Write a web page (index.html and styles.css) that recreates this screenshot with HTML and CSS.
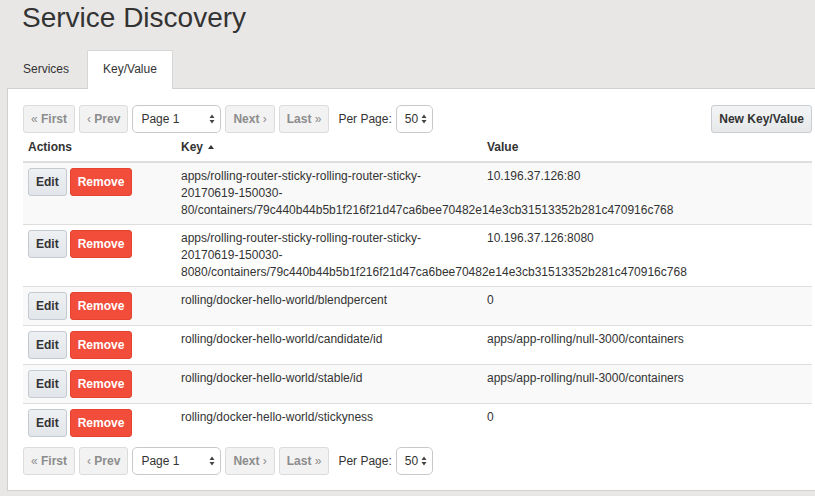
FILE: index.html
```html
<!DOCTYPE html>
<html lang="en">
<head>
<meta charset="utf-8">
<title>Service Discovery</title>
<link rel="stylesheet" href="styles.css">
</head>
<body>
<div class="page">
  <h1 class="title">Service Discovery</h1>
  <nav class="tabs">
    <a class="tab">Services</a>
    <a class="tab active">Key/Value</a>
  </nav>
  <section class="panel">
    <div class="toolbar">
      <div class="pager">
        <span class="pbtn"><span class="ar">«</span> First</span>
        <span class="pbtn"><span class="ar">‹</span> Prev</span>
        <div class="select page-select">
          <span>Page 1</span>
          <svg class="updown" width="6" height="10" viewBox="0 0 6 10"><path d="M3 0.5 L5.5 4 L0.5 4 Z M0.5 6 L5.5 6 L3 9.5 Z" fill="#444"/></svg>
        </div>
        <span class="pbtn">Next <span class="ar">›</span></span>
        <span class="pbtn">Last <span class="ar">»</span></span>
        <div class="perpage">
          <span class="label">Per Page:</span>
          <div class="select per-select">
            <span>50</span>
            <svg class="updown" width="6" height="10" viewBox="0 0 6 10"><path d="M3 0.5 L5.5 4 L0.5 4 Z M0.5 6 L5.5 6 L3 9.5 Z" fill="#444"/></svg>
          </div>
        </div>
      </div>
      <span class="btn btn-default">New Key/Value</span>
    </div>

    <table class="kv">
      <colgroup>
        <col class="c-actions">
        <col class="c-key">
        <col>
      </colgroup>
      <thead>
        <tr>
          <th>Actions</th>
          <th>Key <span class="sort-up"></span></th>
          <th>Value</th>
        </tr>
      </thead>
      <tbody>
        <tr>
          <td><div class="actions"><span class="btn btn-edit">Edit</span><span class="btn btn-remove">Remove</span></div></td>
          <td class="key">apps/rolling-router-sticky-rolling-router-sticky-<br>20170619-150030-<br>80/containers/79c440b44b5b1f216f21d47ca6bee70482e14e3cb31513352b281c470916c768</td>
          <td>10.196.37.126:80</td>
        </tr>
        <tr>
          <td><div class="actions"><span class="btn btn-edit">Edit</span><span class="btn btn-remove">Remove</span></div></td>
          <td class="key">apps/rolling-router-sticky-rolling-router-sticky-<br>20170619-150030-<br>8080/containers/79c440b44b5b1f216f21d47ca6bee70482e14e3cb31513352b281c470916c768</td>
          <td>10.196.37.126:8080</td>
        </tr>
        <tr>
          <td><div class="actions"><span class="btn btn-edit">Edit</span><span class="btn btn-remove">Remove</span></div></td>
          <td class="key">rolling/docker-hello-world/blendpercent</td>
          <td>0</td>
        </tr>
        <tr>
          <td><div class="actions"><span class="btn btn-edit">Edit</span><span class="btn btn-remove">Remove</span></div></td>
          <td class="key">rolling/docker-hello-world/candidate/id</td>
          <td>apps/app-rolling/null-3000/containers</td>
        </tr>
        <tr>
          <td><div class="actions"><span class="btn btn-edit">Edit</span><span class="btn btn-remove">Remove</span></div></td>
          <td class="key">rolling/docker-hello-world/stable/id</td>
          <td>apps/app-rolling/null-3000/containers</td>
        </tr>
        <tr>
          <td><div class="actions"><span class="btn btn-edit">Edit</span><span class="btn btn-remove">Remove</span></div></td>
          <td class="key">rolling/docker-hello-world/stickyness</td>
          <td>0</td>
        </tr>
      </tbody>
    </table>

    <div class="toolbar bottom">
      <div class="pager">
        <span class="pbtn"><span class="ar">«</span> First</span>
        <span class="pbtn"><span class="ar">‹</span> Prev</span>
        <div class="select page-select">
          <span>Page 1</span>
          <svg class="updown" width="6" height="10" viewBox="0 0 6 10"><path d="M3 0.5 L5.5 4 L0.5 4 Z M0.5 6 L5.5 6 L3 9.5 Z" fill="#444"/></svg>
        </div>
        <span class="pbtn">Next <span class="ar">›</span></span>
        <span class="pbtn">Last <span class="ar">»</span></span>
        <div class="perpage">
          <span class="label">Per Page:</span>
          <div class="select per-select">
            <span>50</span>
            <svg class="updown" width="6" height="10" viewBox="0 0 6 10"><path d="M3 0.5 L5.5 4 L0.5 4 Z M0.5 6 L5.5 6 L3 9.5 Z" fill="#444"/></svg>
          </div>
        </div>
      </div>
    </div>
  </section>
</div>
</body>
</html>
```
FILE: styles.css
```css
html, body {
  margin: 0;
  padding: 0;
  overflow: hidden;
}
body {
  background: #e9e7e6;
  font-family: "Liberation Sans", Arial, Helvetica, sans-serif;
  font-size: 12px;
  color: #333;
}
.page {
  width: 821px;
  padding-left: 7px;
}
.title {
  margin: 0;
  padding: 2px 0 0 15px;
  font-size: 28px;
  line-height: 32px;
  font-weight: normal;
  color: #333;
}
.tabs {
  display: flex;
  align-items: flex-end;
  margin-top: 16px;
  height: 38px;
}
.tab {
  display: block;
  padding: 0 15px 2px;
  line-height: 36px;
  border: 1px solid transparent;
  border-bottom: 0;
  margin-right: 2px;
  margin-bottom: -1px;
  color: #333;
  border-radius: 2px 2px 0 0;
}
.tab.active {
  position: relative;
  z-index: 1;
  background: #fff;
  border-color: #d6d6d6;
}
.panel {
  background: #fff;
  border: 1px solid #d0d0d0;
  padding: 16px 15px 15px;
}
.toolbar {
  display: flex;
  align-items: center;
  justify-content: space-between;
  height: 28px;
}
.toolbar.bottom {
  margin-top: 5px;
}
.pager {
  display: flex;
  align-items: center;
  gap: 4px;
}
.pbtn {
  box-sizing: border-box;
  height: 28px;
  line-height: 26px;
  padding: 0 7px;
  border: 1px solid #dcdcdc;
  border-radius: 3px;
  background: #f2f2f2;
  color: #8c8c8c;
  font-weight: bold;
  white-space: nowrap;
}
.pbtn .ar {
  font-weight: normal;
}
.select {
  box-sizing: border-box;
  height: 28px;
  display: flex;
  align-items: center;
  justify-content: space-between;
  padding: 0 5px 0 8px;
  border: 1px solid #c9c9c9;
  border-radius: 5px;
  background: #fff;
  color: #333;
  font-size: 12px;
}
.page-select {
  width: 89px;
}
.per-select {
  width: 37px;
}
.updown {
  display: block;
}
.perpage {
  display: flex;
  align-items: center;
  gap: 4px;
  margin-left: 5px;
}
.btn {
  box-sizing: border-box;
  display: inline-block;
  height: 28px;
  line-height: 26px;
  padding: 0 7px;
  border-radius: 3px;
  font-weight: bold;
  white-space: nowrap;
}
.btn-default {
  border: 1px solid #c9cdd1;
  background: linear-gradient(#f3f4f5, #e6e8ea);
  color: #333;
}
.btn-edit {
  border: 1px solid #c3cad1;
  background: linear-gradient(#eef0f2, #e2e6ea);
  color: #333;
}
.btn-remove {
  border: 1px solid #e4432f;
  background: #f24d3b;
  color: #fff;
}
.kv {
  width: 100%;
  table-layout: fixed;
  border-collapse: collapse;
}
.c-actions { width: 153px; }
.c-key { width: 306px; }
.kv th {
  text-align: left;
  font-weight: bold;
  padding: 6px 5px 5px;
  line-height: 17px;
  border-bottom: 2px solid #dedede;
  white-space: nowrap;
}
.kv td {
  padding: 5px;
  line-height: 17px;
  vertical-align: top;
  border-top: 1px solid #dedede;
  color: #333;
}
.kv tbody tr:nth-child(odd) td {
  background: #f9f9f9;
}
.kv td.key {
  white-space: nowrap;
}
.actions {
  display: flex;
  gap: 3px;
}
.sort-up {
  display: inline-block;
  width: 0;
  height: 0;
  margin-left: 2px;
  border-left: 3.5px solid transparent;
  border-right: 3.5px solid transparent;
  border-bottom: 4px solid #333;
  vertical-align: 2px;
}
```
